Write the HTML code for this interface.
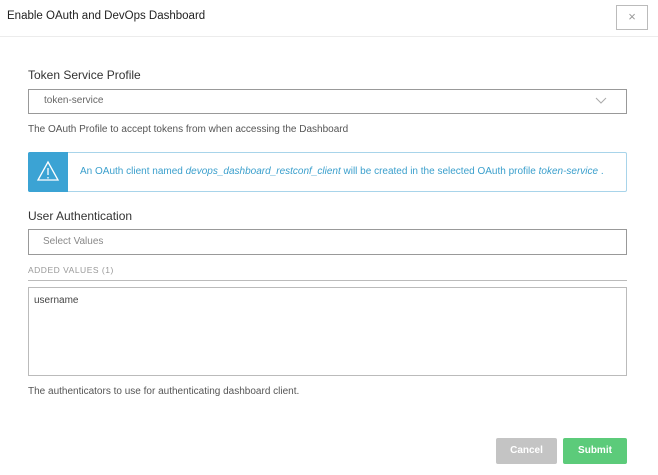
<!DOCTYPE html>
<html><head><style>
body{margin:0;width:658px;height:475px;background:#fff;font-family:"Liberation Sans",sans-serif;position:relative;overflow:hidden}
.a{position:absolute}
</style></head><body>
<div class="a" style="left:0;top:0;width:658px;height:36px;border-bottom:1px solid #ececec"></div>
<div class="a" style="left:7px;top:10px;font-size:11.5px;color:#222">Enable OAuth and DevOps Dashboard</div>
<div class="a" style="left:616px;top:5px;width:32px;height:25px;border:1px solid #bbb;box-sizing:border-box;color:#999;font-size:13px;text-align:center;line-height:22px">×</div>
<div class="a" style="left:28px;top:68px;font-size:12px;color:#333">Token Service Profile</div>
<div class="a" style="left:28px;top:89px;width:599px;height:25px;border:1px solid #999;box-sizing:border-box"></div>
<div class="a" style="left:44px;top:95px;font-size:10px;color:#666">token-service</div>
<svg class="a" style="left:595px;top:97px" width="12" height="8"><path d="M1 1l5 5 5-5" fill="none" stroke="#aaa" stroke-width="1"/></svg>
<div class="a" style="left:28px;top:124px;font-size:10px;color:#555">The OAuth Profile to accept tokens from when accessing the Dashboard</div>
<div class="a" style="left:28px;top:152px;width:599px;height:40px;border:1px solid #a8d4ea;box-sizing:border-box;border-radius:2px"></div>
<div class="a" style="left:28px;top:152px;width:40px;height:40px;background:#3ba3d4;border-radius:2px 0 0 2px"></div>
<svg class="a" style="left:36px;top:160px" width="24" height="22"><path d="M12 2L22 20H2Z" fill="none" stroke="#fff" stroke-width="1.3"/><path d="M12 8v7M12 17v1.5" stroke="#fff" stroke-width="1.3"/></svg>
<div class="a" style="left:80px;top:166px;font-size:10px;color:#3a9fcc;white-space:nowrap">An OAuth client named <i>devops_dashboard_restconf_client</i> will be created in the selected OAuth profile <i>token-service</i> .</div>
<div class="a" style="left:28px;top:209px;font-size:12px;color:#333">User Authentication</div>
<div class="a" style="left:28px;top:229px;width:599px;height:26px;border:1px solid #999;box-sizing:border-box"></div>
<div class="a" style="left:43px;top:236px;font-size:10px;color:#888">Select Values</div>
<div class="a" style="left:28px;top:265px;font-size:8.5px;color:#999;letter-spacing:.5px">ADDED VALUES (1)</div>
<div class="a" style="left:28px;top:280px;width:599px;height:1px;background:#bbb"></div>
<div class="a" style="left:28px;top:287px;width:599px;height:89px;border:1px solid #bbb;box-sizing:border-box"></div>
<div class="a" style="left:34px;top:295px;font-size:10px;color:#444">username</div>
<div class="a" style="left:28px;top:386px;font-size:10px;color:#555">The authenticators to use for authenticating dashboard client.</div>
<div class="a" style="left:496px;top:438px;width:61px;height:26px;background:#c4c4c4;border-radius:2px;color:#fff;font-size:10px;font-weight:bold;text-align:center;line-height:26px">Cancel</div>
<div class="a" style="left:563px;top:438px;width:64px;height:26px;background:#5ccb7a;border-radius:2px;color:#fff;font-size:10px;font-weight:bold;text-align:center;line-height:26px">Submit</div>
</body></html>
